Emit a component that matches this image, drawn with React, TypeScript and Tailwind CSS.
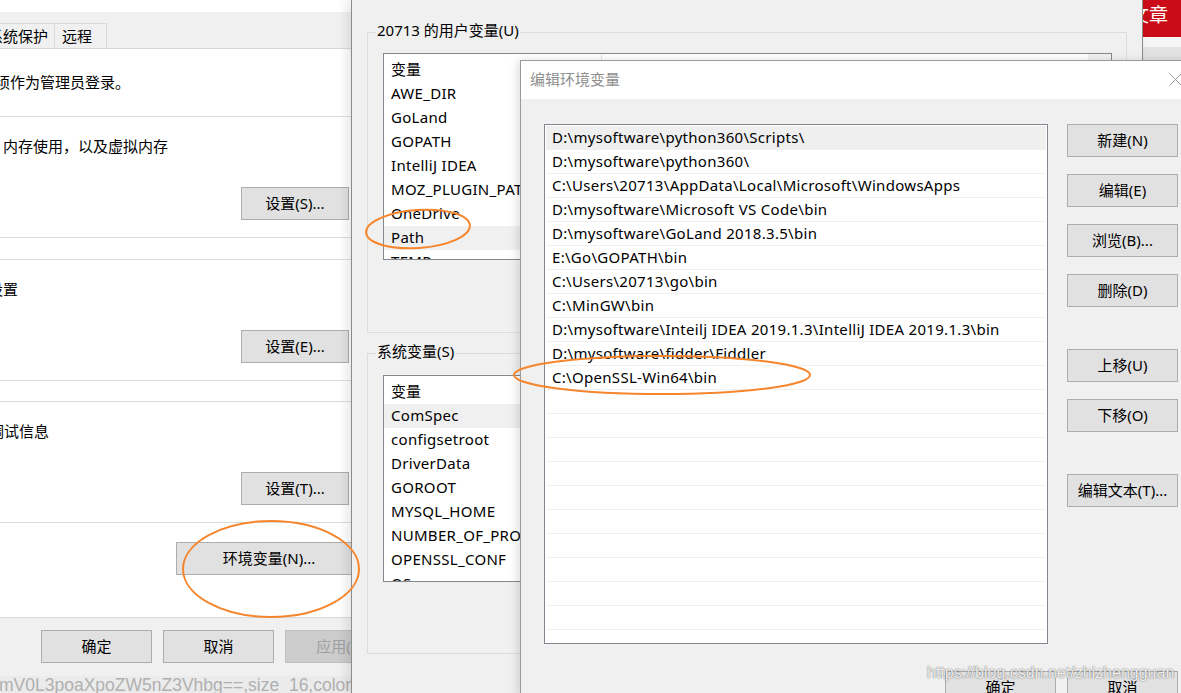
import clsx from "clsx"

const userVars = ["AWE_DIR", "GoLand", "GOPATH", "IntelliJ IDEA", "MOZ_PLUGIN_PATH", "OneDrive", "Path", "TEMP", "TMP"]
const sysVars = ["ComSpec", "configsetroot", "DriverData", "GOROOT", "MYSQL_HOME", "NUMBER_OF_PROCESSORS", "OPENSSL_CONF", "OS", "Path"]
const pathList = [
  "D:\\mysoftware\\python360\\Scripts\\",
  "D:\\mysoftware\\python360\\",
  "C:\\Users\\20713\\AppData\\Local\\Microsoft\\WindowsApps",
  "D:\\mysoftware\\Microsoft VS Code\\bin",
  "D:\\mysoftware\\GoLand 2018.3.5\\bin",
  "E:\\Go\\GOPATH\\bin",
  "C:\\Users\\20713\\go\\bin",
  "C:\\MinGW\\bin",
  "D:\\mysoftware\\Inteilj IDEA 2019.1.3\\IntelliJ IDEA 2019.1.3\\bin",
  "D:\\mysoftware\\fidder\\Fiddler",
  "C:\\OpenSSL-Win64\\bin",
  "", "", "", "", "", "", "", "", "", "", "",
]

type BtnProps = { label: string; className?: string; disabled?: boolean }

function WinButton({ label, className, disabled }: BtnProps) {
  return (
    <div
      className={clsx(
        "flex h-[33px] shrink-0 items-center justify-center whitespace-nowrap border text-[15px]",
        disabled ? "border-[#bfbfbf] bg-[#cccccc] text-[#a0a0a0]" : "border-[#adadad] bg-[#e1e1e1] text-black",
        className,
      )}
    >
      {label}
    </div>
  )
}

function SettingsGroup({ text, shift, button }: { text: string; shift: string; button: string }) {
  return (
    <div className="h-[122px] shrink-0 border-y border-[#dcdcdc]">
      <div className={clsx("whitespace-nowrap pt-[19px] text-[15px] leading-[20px]", shift)}>{text}</div>
      <WinButton label={button} className="ml-[241px] mt-[31px] w-[108px]" />
    </div>
  )
}

function SystemProperties() {
  return (
    <div className="absolute left-0 top-0 flex h-[676px] w-[351px] flex-col overflow-hidden bg-[#f0f0f0]">
      <div className="h-[12px] bg-white" />
      <div className="flex h-[37px] items-end border-b border-[#d9d9d9] text-[15px]">
        <div className="-ml-[20px] flex h-[25px] w-[75px] items-center whitespace-nowrap border border-b-0 border-[#d9d9d9] pl-[7px]">
          系统保护
        </div>
        <div className="flex h-[25px] w-[52px] items-center border border-b-0 border-l-0 border-[#d9d9d9] pl-[7px]">远程</div>
      </div>
      <div className="flex h-[569px] flex-col border-b border-[#d9d9d9] bg-white">
        <div className="h-[67px] shrink-0 whitespace-nowrap pt-[23px] text-[15px] leading-[20px]">
          <div className="-ml-[5px]">须作为管理员登录。</div>
        </div>
        <SettingsGroup text="，内存使用，以及虚拟内存" shift="-ml-[12px]" button="设置(S)..." />
        <div className="mt-[21px]">
          <SettingsGroup text="设置" shift="-ml-[12px]" button="设置(E)..." />
        </div>
        <div className="mt-[20px]">
          <SettingsGroup text="调试信息" shift="-ml-[11px]" button="设置(T)..." />
        </div>
        <WinButton label="环境变量(N)..." className="ml-[176px] mt-[19px] w-[186px]" />
      </div>
      <div className="flex gap-[11px] pl-[41px] pt-[12px]">
        <WinButton label="确定" className="w-[111px]" />
        <WinButton label="取消" className="w-[111px]" />
        <WinButton label="应用(A)" className="w-[111px]" disabled />
      </div>
    </div>
  )
}

function VarList({ items, selected }: { items: string[]; selected: string }) {
  return (
    <div className="ml-[15px] flex h-[207px] w-[729px] overflow-hidden border border-[#828790] bg-white text-[15px]">
      <div className="flex-1">
        <div className="flex h-[28px]">
          <div className="w-[218px] border-r border-[#e5e5e5] pl-[7px] pt-[5px] leading-[20px]">变量</div>
          <div className="flex-1 pl-[7px] pt-[5px] leading-[20px]">值</div>
        </div>
        {items.map((v) => (
          <div
            key={v}
            className={clsx("h-[24px] whitespace-nowrap pl-[7px] leading-[23px] tracking-[0.3px]", v === selected && "bg-[#f0f0f0]")}
          >
            {v}
          </div>
        ))}
      </div>
      <div className="w-[23px] bg-[#f0f0f0]" />
    </div>
  )
}

function EnvVariables() {
  return (
    <div className="absolute left-[351px] top-0 h-[693px] w-[792px] border-x border-[#8c8c8c] bg-[#f0f0f0] shadow-[-4px_0_10px_rgba(0,0,0,0.10)]">
      <fieldset className="ml-[15px] mt-[20px] h-[313px] w-[760px] border border-[#dcdcdc]">
        <legend className="ml-[8px] px-[1px] pb-[4px] text-[15px] leading-[20px]">20713 的用户变量(U)</legend>
        <div className="mt-[9px]">
          <VarList items={userVars} selected="Path" />
        </div>
      </fieldset>
      <fieldset className="ml-[15px] mt-[8px] h-[313px] w-[760px] border border-[#dcdcdc]">
        <legend className="ml-[8px] px-[1px] pb-[4px] text-[15px] leading-[20px]">系统变量(S)</legend>
        <div className="mt-[10px]">
          <VarList items={sysVars} selected="ComSpec" />
        </div>
      </fieldset>
    </div>
  )
}

function EditEnvVariable() {
  return (
    <div className="absolute left-[520px] top-[60px] h-[640px] w-[680px] border-l border-t border-[#9a9a9a] bg-[#f0f0f0] shadow-[-3px_0_8px_rgba(0,0,0,0.12)]">
      <div className="flex h-[38px] items-center justify-between bg-white pl-[9px] pr-[18px]">
        <span className="-mt-[1px] text-[15px] text-[#8e8e8e]">编辑环境变量</span>
        <svg width="13" height="13" viewBox="0 0 13 13" className="-mt-[2px]">
          <path d="M0.5 0.5 L12.5 12.5 M12.5 0.5 L0.5 12.5" stroke="#9a9a9a" strokeWidth="1" />
        </svg>
      </div>
      <div className="pl-[23px] pt-[25px]">
        <div className="flex">
          <div className="h-[520px] w-[504px] overflow-hidden border border-[#828790] bg-white px-[1px] pt-[1px] text-[15px]">
            {pathList.map((p, i) => (
              <div
                key={i}
                className={clsx(
                  "h-[24px] whitespace-nowrap border-b border-[#f0f0f0] pl-[6px] leading-[23px] tracking-[0.3px]",
                  i === 0 && "bg-[#efefef]",
                )}
              >
                {p}
              </div>
            ))}
          </div>
          <div className="ml-[19px] flex flex-col">
            <WinButton label="新建(N)" className="w-[111px]" />
            <WinButton label="编辑(E)" className="mt-[17px] w-[111px]" />
            <WinButton label="浏览(B)..." className="mt-[17px] w-[111px]" />
            <WinButton label="删除(D)" className="mt-[17px] w-[111px]" />
            <WinButton label="上移(U)" className="mt-[42px] w-[111px]" />
            <WinButton label="下移(O)" className="mt-[17px] w-[111px]" />
            <WinButton label="编辑文本(T)..." className="mt-[42px] w-[111px]" />
          </div>
        </div>
        <div className="mt-[27px] flex w-[634px] justify-end gap-[11px]">
          <WinButton label="确定" className="w-[111px]" />
          <WinButton label="取消" className="w-[111px]" />
        </div>
      </div>
    </div>
  )
}

export default function App() {
  return (
    <div className="relative h-[693px] w-[1181px] overflow-hidden bg-[#ebebeb] font-['Noto_Sans','Noto_Sans_CJK_SC',sans-serif] text-black">
      <div className="flex h-full flex-col justify-between">
        <div>
          <div className="flex h-[37px] justify-end bg-[#ca0c18] pr-[13px] text-[19px] leading-[30px] text-white">文章</div>
          <div className="h-[10px] bg-[#f6f6f6]" />
          <div className="h-[13px] bg-[#e2e2e2]" />
        </div>
        <div className="h-[17px] overflow-hidden whitespace-nowrap font-['Liberation_Sans',sans-serif] text-[17.5px] leading-[20px] text-[#b0b0b0]">
          <div className="-ml-[1px] -mt-[1px]">mV0L3poaXpoZW5nZ3Vhbg==,size_16,color_FFFFFF,t_70</div>
        </div>
      </div>

      <SystemProperties />
      <EnvVariables />
      <EditEnvVariable />

      <div className="pointer-events-none absolute left-[927px] top-[665px] whitespace-nowrap font-['Liberation_Sans',sans-serif] text-[16px] leading-[16px] text-white/90 [text-shadow:0_0_1px_rgba(0,0,0,0.55),0_0_2px_rgba(0,0,0,0.3)]">
        https://blog.csdn.net/zhizhengguan
      </div>

      <svg className="pointer-events-none absolute left-0 top-0" width="1181" height="693" viewBox="0 0 1181 693">
        <g fill="none" stroke="#f5862e" strokeWidth="2">
          <ellipse cx="418" cy="229" rx="52" ry="19" transform="rotate(-4 418 229)" />
          <ellipse cx="662" cy="375" rx="148" ry="19" />
          <ellipse cx="271" cy="569" rx="88" ry="48" />
        </g>
      </svg>
    </div>
  )
}
